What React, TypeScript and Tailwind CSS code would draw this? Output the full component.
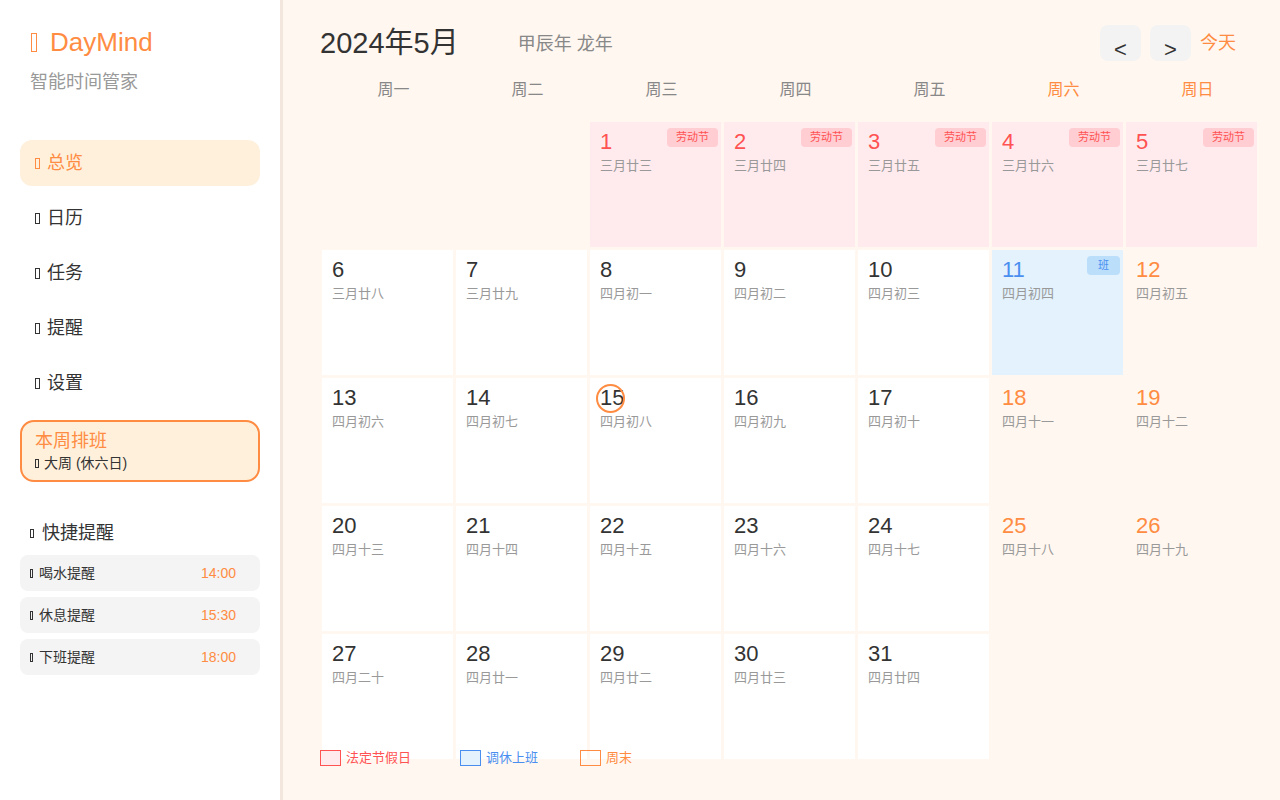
const ORANGE = "text-[#ff8c42]";

type Day = {
  d: number;
  lunar: string;
  kind?: "holiday" | "work" | "weekend";
  badge?: string;
  today?: boolean;
};

const lunar = [
  "三月廿三", "三月廿四", "三月廿五", "三月廿六", "三月廿七", "三月廿八", "三月廿九",
  "四月初一", "四月初二", "四月初三", "四月初四", "四月初五", "四月初六", "四月初七",
  "四月初八", "四月初九", "四月初十", "四月十一", "四月十二", "四月十三", "四月十四",
  "四月十五", "四月十六", "四月十七", "四月十八", "四月十九", "四月二十", "四月廿一",
  "四月廿二", "四月廿三", "四月廿四",
];

// May 2024 starts on Wednesday
const days: (Day | null)[] = [null, null];
for (let i = 1; i <= 31; i++) {
  const col = (i + 1) % 7; // 0 = Mon
  let kind: Day["kind"];
  let badge: string | undefined;
  if (i <= 5) {
    kind = "holiday";
    badge = "劳动节";
  } else if (i === 11) {
    kind = "work";
    badge = "班";
  } else if (col >= 5) {
    kind = "weekend";
  }
  days.push({ d: i, lunar: lunar[i - 1], kind, badge, today: i === 15 });
}
while (days.length < 35) days.push(null);

function Tofu({ className }: { className: string }) {
  return <span className={"inline-block border border-current shrink-0 " + className} />;
}

function Cell({ day }: { day: Day | null }) {
  if (!day) return <div className="h-[125px]" />;
  const bg =
    day.kind === "holiday"
      ? "bg-[#ffebee]"
      : day.kind === "work"
      ? "bg-[#e3f2fd]"
      : day.kind === "weekend"
      ? ""
      : "bg-white";
  const numColor =
    day.kind === "holiday"
      ? "text-[#ff5252]"
      : day.kind === "work"
      ? "text-[#4a8ff0]"
      : day.kind === "weekend"
      ? ORANGE
      : "text-[#333]";
  return (
    <div className={`relative h-[125px] pl-[10px] pt-[6px] ${bg}`}>
      <div className={`text-[22px] leading-[28px] ${numColor}`}>
        <span className="relative inline-block">
          {day.d}
          {day.today && (
            <span className="absolute left-[-4px] top-0 w-[29px] h-[29px] rounded-full border-2 border-[#ff8c42]" />
          )}
        </span>
      </div>
      <div className="mt-[1px] text-[13px] leading-[18px] text-[#999]">{day.lunar}</div>
      {day.badge && (
        <span
          className={`absolute top-[6px] right-[3px] h-[19px] rounded-[4px] text-[11px] leading-[19px] text-center ${
            day.kind === "work"
              ? "w-[33px] bg-[#bbdefb] text-[#4a8ff0]"
              : "w-[51px] bg-[#ffcdd2] text-[#ff5252]"
          }`}
        >
          {day.badge}
        </span>
      )}
    </div>
  );
}

const nav = ["总览", "日历", "任务", "提醒", "设置"];
const reminders = [
  ["喝水提醒", "14:00"],
  ["休息提醒", "15:30"],
  ["下班提醒", "18:00"],
];
const weekdays = ["周一", "周二", "周三", "周四", "周五", "周六", "周日"];

export default function App() {
  return (
    <div
      className="flex w-full h-screen overflow-hidden"
      style={{ fontFamily: '"Liberation Sans", "Noto Sans CJK SC", sans-serif' }}
    >
      {/* SIDEBAR */}
      <aside className="w-[283px] shrink-0 h-full bg-white border-r-[3px] border-[#f3e7dd] px-[20px] pt-[26px]">
        <div className={`flex items-center pl-[11px] h-[32px] text-[26px] ${ORANGE}`}>
          <Tofu className="w-[6px] h-[19px] mr-[13px]" />
          DayMind
        </div>
        <div className="mt-[12px] pl-[10px] text-[18px] leading-[24px] text-[#999]">智能时间管家</div>

        <nav className="mt-[46px] flex flex-col gap-[9px]">
          {nav.map((n, i) => (
            <div
              key={n}
              className={`flex items-center h-[46px] rounded-[12px] px-[15px] text-[18px] ${
                i === 0 ? "bg-[#fff0dc] text-[#ff8c42]" : "text-[#333]"
              }`}
            >
              <Tofu className="w-[5px] h-[11px] mr-[7px]" />
              {n}
            </div>
          ))}
        </nav>

        <div className="mt-[14px] h-[62px] rounded-[14px] border-2 border-[#ff8c42] bg-[#fff0dc] pl-[13px] pt-[7px]">
          <div className={`text-[18px] leading-[24px] ${ORANGE}`}>本周排班</div>
          <div className="flex items-center text-[14px] leading-[20px] text-[#333]">
            <Tofu className="w-[4px] h-[9px] mr-[5px]" />
            大周 (休六日)
          </div>
        </div>

        <div className="mt-[39px] pl-[10px] flex items-center text-[18px] leading-[24px] text-[#333]">
          <Tofu className="w-[4px] h-[9px] mr-[8px]" />
          快捷提醒
        </div>

        <div className="mt-[10px] flex flex-col gap-[6px]">
          {reminders.map(([t, time]) => (
            <div
              key={t}
              className="flex items-center justify-between h-[36px] rounded-[8px] bg-[#f4f4f4] pl-[10px] pr-[24px] text-[14px]"
            >
              <span className="flex items-center text-[#333]">
                <Tofu className="w-[3px] h-[9px] mr-[6px]" />
                {t}
              </span>
              <span className={ORANGE}>{time}</span>
            </div>
          ))}
        </div>
      </aside>

      {/* MAIN */}
      <main className="relative flex-1 h-full bg-[#fff7f0] pl-[37px] pt-[25px]">
        <div className="flex items-center justify-between h-[36px] pr-[44px]">
          <div className="flex items-center">
            <h1 className="text-[29px] leading-[36px] text-[#333]">2024年5月</h1>
            <span className="ml-[59px] mt-[3px] text-[18px] text-[#888]">甲辰年 龙年</span>
          </div>
          <div className="flex items-center gap-[9px]">
            <button className="w-[41px] h-[36px] rounded-[8px] bg-[#f3f3f3] text-[22px] leading-none pt-[13px] text-[#333]">
              &lt;
            </button>
            <button className="w-[41px] h-[36px] rounded-[8px] bg-[#f3f3f3] text-[22px] leading-none pt-[13px] text-[#333]">
              &gt;
            </button>
            <button className={`text-[18px] ${ORANGE}`}>今天</button>
          </div>
        </div>

        <div className="mt-[17px] ml-[8px] grid grid-cols-[repeat(7,131px)] gap-x-[3px] h-[24px]">
          {weekdays.map((w, i) => (
            <div
              key={w}
              className={`text-center text-[16px] leading-[24px] ${i >= 5 ? ORANGE : "text-[#888]"}`}
            >
              {w}
            </div>
          ))}
        </div>

        <div className="mt-[20px] ml-[2px] grid grid-cols-[repeat(7,131px)] gap-[3px]">
          {days.map((d, i) => (
            <Cell key={i} day={d} />
          ))}
        </div>

        <div className="absolute left-[37px] top-[750px] flex items-center text-[13px] leading-[16px]">
          <div className="w-[140px] flex items-center text-[#ff5252]">
            <span className="w-[21px] h-[16px] border border-[#ff5252] bg-[#ffebee] mr-[5px]" />
            法定节假日
          </div>
          <div className="w-[120px] flex items-center text-[#4a8ff0]">
            <span className="w-[21px] h-[16px] border border-[#4a8ff0] bg-[#e3f2fd] mr-[5px]" />
            调休上班
          </div>
          <div className={`flex items-center ${ORANGE}`}>
            <span className="w-[21px] h-[16px] border border-[#ff8c42] mr-[5px]" />
            周末
          </div>
        </div>
      </main>
    </div>
  );
}
